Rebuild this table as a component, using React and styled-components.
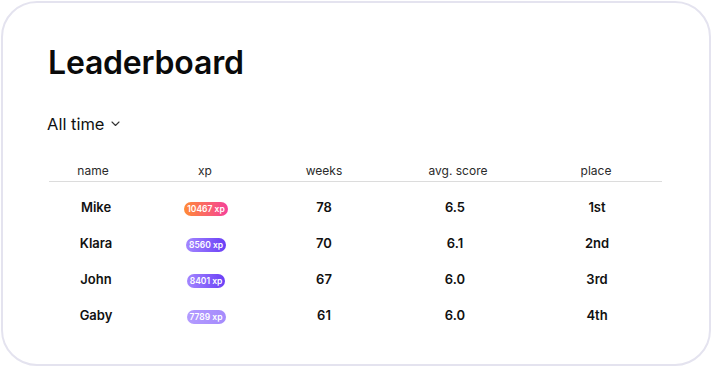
import styled, { createGlobalStyle } from 'styled-components';

const GlobalStyle = createGlobalStyle`
    html, body {
        margin: 0;
        padding: 0;
        background: #ffffff;
    }
    body {
        font-family: Inter, "Noto Sans", sans-serif;
        color: #111111;
    }
`;

const Card = styled.div`
    box-sizing: border-box;
    width: 710px;
    height: 365px;
    margin: 1px 0 0 1px;
    border: 2px solid #e4e3ef;
    border-radius: 36px;
    padding: 40px 0 0 44px;
`;

const Title = styled.h1`
    margin: 0 0 0 1px;
    font-size: 32px;
    font-weight: 600;
    line-height: 40px;
    letter-spacing: -0.2px;
    color: #0a0a0a;
`;

const Filter = styled.button`
    display: flex;
    align-items: center;
    gap: 7px;
    margin-top: 31px;
    padding: 0;
    border: none;
    background: none;
    font-family: inherit;
    font-size: 16.5px;
    color: #111111;
    line-height: 20px;
    cursor: pointer;
`;

const Table = styled.div`
    width: 613px;
    margin: 26px 0 0 2px;
`;

const columns = '88px 136px 102px 166px 110px';

const HeadRow = styled.div`
    display: grid;
    grid-template-columns: ${columns};
    height: 21px;
    align-items: center;
    border-bottom: 1px solid #dcdcdc;
`;

const HeadCell = styled.div`
    text-align: center;
    font-size: 12px;
    color: #2a2a2a;
    padding-bottom: 1px;
`;

const Body = styled.div`
    padding-top: 7px;
`;

const Row = styled.div`
    display: grid;
    grid-template-columns: ${columns};
    height: 36px;
    align-items: center;
`;

const Cell = styled.div`
    text-align: center;
    font-size: 13px;
    font-weight: 600;
    color: #111111;
    padding-left: ${props => props.$nudge > 0 ? props.$nudge * 2 : 0}px;
    padding-right: ${props => props.$nudge < 0 ? -props.$nudge * 2 : 0}px;
`;

const badgeColors = {
    gold: 'linear-gradient(90deg, #ff8a36 0%, #f5419a 100%)',
    purple: 'linear-gradient(90deg, #a386ff 0%, #6a3ff6 100%)',
    light: 'linear-gradient(90deg, #b39bff 0%, #a58bfc 100%)'
};

const Badge = styled.span`
    display: inline-block;
    height: 14px;
    line-height: 14px;
    padding: 0 3px;
    border-radius: 8px;
    background: ${props => badgeColors[props.$tone]};
    color: #ffffff;
    font-size: 8.5px;
    font-weight: 600;
`;

const players = [
    { name: 'Mike', xp: 10467, weeks: 78, score: '6.5', place: '1st', tone: 'gold' },
    { name: 'Klara', xp: 8560, weeks: 70, score: '6.1', place: '2nd', tone: 'purple' },
    { name: 'John', xp: 8401, weeks: 67, score: '6.0', place: '3rd', tone: 'purple' },
    { name: 'Gaby', xp: 7789, weeks: 61, score: '6.0', place: '4th', tone: 'light' }
];

function Chevron() {
    return (
        <svg width="9" height="6" viewBox="0 0 9 6" fill="none">
            <path d="M1 1l3.5 3.5L8 1" stroke="#333" strokeWidth="1.1" strokeLinecap="round" strokeLinejoin="round" />
        </svg>
    );
}

export default function App() {
    return (
        <>
            <GlobalStyle />
            <Card>
                <Title>Leaderboard</Title>
                <Filter>
                    All time
                    <Chevron />
                </Filter>
                <Table>
                    <HeadRow>
                        <HeadCell>name</HeadCell>
                        <HeadCell>xp</HeadCell>
                        <HeadCell>weeks</HeadCell>
                        <HeadCell>avg. score</HeadCell>
                        <HeadCell>place</HeadCell>
                    </HeadRow>
                    <Body>
                        {players.map(p => (
                            <Row key={p.name}>
                                <Cell $nudge={3}>{p.name}</Cell>
                                <Cell $nudge={1}><Badge $tone={p.tone}>{p.xp} xp</Badge></Cell>
                                <Cell>{p.weeks}</Cell>
                                <Cell $nudge={-3}>{p.score}</Cell>
                                <Cell $nudge={1}>{p.place}</Cell>
                            </Row>
                        ))}
                    </Body>
                </Table>
            </Card>
        </>
    );
}
